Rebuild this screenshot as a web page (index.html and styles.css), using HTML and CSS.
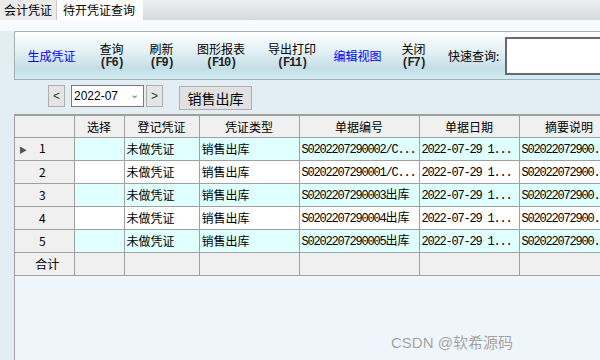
FILE: index.html
```html
<!DOCTYPE html>
<html lang="zh-CN">
<head>
  <meta charset="UTF-8">
  <title>待开凭证查询</title>
  <link rel="stylesheet" href="styles.css">
</head>
<body>
  <div class="tabs">
    <div class="tab">会计凭证</div>
    <div class="tab active">待开凭证查询</div>
  </div>
  <div class="strip"></div>

  <div class="main">
    <div class="toolbar">
      <div class="tool link">生成凭证</div>
      <div class="tool"><span>查询</span><span class="key">(F6)</span></div>
      <div class="tool"><span>刷新</span><span class="key">(F9)</span></div>
      <div class="tool"><span>图形报表</span><span class="key">(F10)</span></div>
      <div class="tool"><span>导出打印</span><span class="key">(F11)</span></div>
      <div class="tool link">编辑视图</div>
      <div class="tool"><span>关闭</span><span class="key">(F7)</span></div>
      <div class="quick">快速查询:</div>
      <div class="search"></div>
    </div>

    <div class="daterow">
      <button class="nav">&lt;</button>
      <div class="month"><span>2022-07</span><span class="chev">&#8964;</span></div>
      <button class="nav">&gt;</button>
      <button class="btn">销售出库</button>
    </div>

    <div class="grid">
      <table>
        <colgroup>
          <col style="width:59px"><col style="width:50px"><col style="width:75px"><col style="width:100px">
          <col style="width:120px"><col style="width:100px"><col style="width:100px">
        </colgroup>
        <thead>
          <tr><th></th><th>选择</th><th>登记凭证</th><th>凭证类型</th><th>单据编号</th><th>单据日期</th><th>摘要说明</th></tr>
        </thead>
        <tbody>
          <tr class="alt">
            <td class="rh"><span class="mark">&#9654;</span>1</td><td></td><td>未做凭证</td><td>销售出库</td>
            <td><span class="mono">S0202207290002/C...</span></td><td><span class="mono">2022-07-29 1...</span></td><td><span class="mono">S02022072900.</span></td>
          </tr>
          <tr>
            <td class="rh"><span class="mark"></span>2</td><td></td><td>未做凭证</td><td>销售出库</td>
            <td><span class="mono">S0202207290001/C...</span></td><td><span class="mono">2022-07-29 1...</span></td><td><span class="mono">S02022072900.</span></td>
          </tr>
          <tr class="alt">
            <td class="rh"><span class="mark"></span>3</td><td></td><td>未做凭证</td><td>销售出库</td>
            <td><span class="mono">S0202207290003</span>出库</td><td><span class="mono">2022-07-29 1...</span></td><td><span class="mono">S02022072900.</span></td>
          </tr>
          <tr>
            <td class="rh"><span class="mark"></span>4</td><td></td><td>未做凭证</td><td>销售出库</td>
            <td><span class="mono">S0202207290004</span>出库</td><td><span class="mono">2022-07-29 1...</span></td><td><span class="mono">S02022072900.</span></td>
          </tr>
          <tr class="alt">
            <td class="rh"><span class="mark"></span>5</td><td></td><td>未做凭证</td><td>销售出库</td>
            <td><span class="mono">S0202207290005</span>出库</td><td><span class="mono">2022-07-29 1...</span></td><td><span class="mono">S02022072900.</span></td>
          </tr>
          <tr class="total">
            <td class="sum">合计</td><td></td><td></td><td></td><td></td><td></td><td></td>
          </tr>
        </tbody>
      </table>
      <div class="watermark">CSDN @软希源码</div>
    </div>
  </div>
</body>
</html>
```

FILE: styles.css
```css
body { margin: 0; height: 360px; overflow: hidden; font-family: "Noto Sans CJK SC", "Liberation Sans", sans-serif; font-size: 12px; color: #000; background: #e2eef4; display: flex; flex-direction: column; }

.tabs { height: 20px; display: flex; background: linear-gradient(#eef0f2, #d6d9dc); }
.tab { height: 20px; line-height: 20px; padding: 0 4px; background: #ebebeb; border-right: 1px solid #c9c9c9; }
.tab.active { background: #fff; padding: 0 8px 0 6px; border-right: none; }
.strip { height: 11px; background: #f8fbfd; }

.main { flex: 1; display: flex; flex-direction: column; min-height: 0; }

.toolbar { margin-left: 14px; height: 47px; border: 1px solid #a7afb3; border-right: none; border-top-left-radius: 2px; background: linear-gradient(#fdfefe 0%, #e4f1f4 40%, #c4dee6 78%, #d2eef7 100%); display: grid; grid-template-columns: 73px 47px 53px 66px 76px 55px 57px auto 1fr; align-items: center; }
.tool { display: flex; flex-direction: column; align-items: center; line-height: 16px; margin-top: -1px; }
.tool.link { color: #0000ff; margin-top: 0; }
.key { font-family: "Liberation Mono", monospace; font-size: 12px; font-weight: bold; letter-spacing: -1.2px; line-height: 12px; color: #222; }
.quick { padding-left: 6px; padding-right: 6px; }
.search { height: 34px; background: #fff; border: 2px solid #6a6a6a; border-right: none; margin-top: 1px; }

.daterow { height: 34px; padding: 5px 0 0 48px; box-sizing: border-box; display: flex; align-items: flex-start; }
.nav { width: 17px; height: 22px; margin: 0; padding: 0; background: #e5e5e5; border: 1px solid #adadad; font-family: "Liberation Sans", sans-serif; font-size: 12px; color: #333; }
.month { width: 65px; height: 20px; margin: 0 2px 0 6px; background: #fff; border: 1px solid #7a7a7a; display: flex; align-items: center; justify-content: space-between; padding: 0 4px 0 2px; box-sizing: content-box; font-family: "Liberation Sans", sans-serif; font-size: 12px; }
.month .chev { color: #777; font-size: 11px; margin-top: -4px; }
.btn { margin: 1px 0 0 16px; width: 73px; height: 24px; padding: 0; background: #e1e1e1; border: 1px solid #adadad; font-family: "Noto Sans CJK SC", sans-serif; font-size: 14px; }

.grid { flex: 1; margin-left: 14px; border-left: 1px solid #a0a0a0; border-top: 2px solid #a0a0a0; background: #eef6fc; overflow: hidden; position: relative; }
table { border-collapse: collapse; table-layout: fixed; width: 604px; }
th, td { height: 22px; padding: 0 2px; border: 1px solid #a0a0a0; white-space: nowrap; overflow: hidden; font-weight: normal; text-align: left; line-height: 16px; }
thead th { height: 21px; background: #f0f0f0; text-align: center; border-top: none; }
th:first-child, td:first-child { border-left: none; }
td { background: #fff; }
tr.alt td { background: #e0ffff; }
td.rh, tr.alt td.rh { background: #f0f0f0; padding-left: 4px; }
.mark { display: inline-block; width: 20px; font-size: 8px; color: #555; }
.total td { background: #f0f0f0; }
td.sum { text-align: center; padding-left: 8px; }
.mono { font-family: "Liberation Mono", monospace; font-size: 12px; letter-spacing: -1.2px; }

.watermark { position: absolute; left: 376px; bottom: 8px; font-family: "Liberation Sans", "Noto Sans CJK SC", sans-serif; font-size: 15px; color: #a2a2a2; text-shadow: 0 0 1px #fff; }
```
